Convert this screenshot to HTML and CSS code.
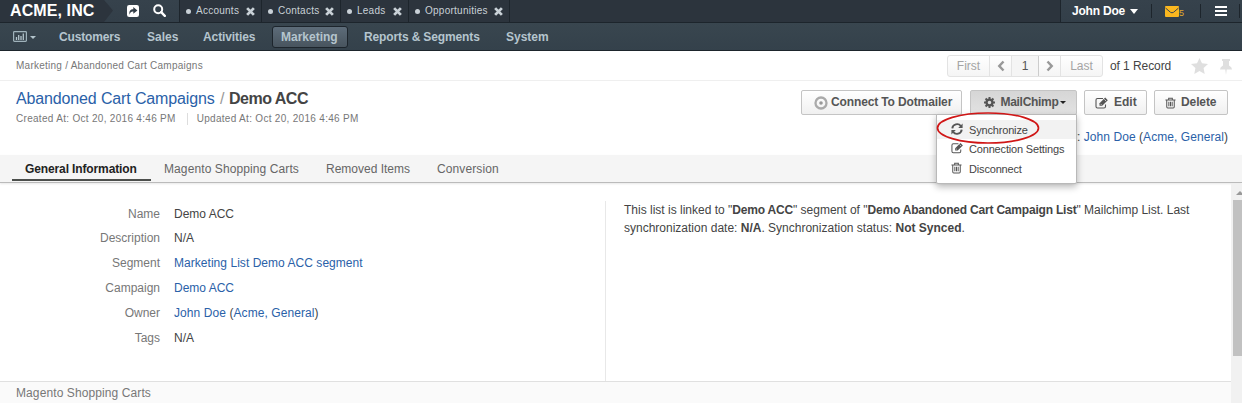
FILE: index.html
```html
<!DOCTYPE html>
<html lang="en">
<head>
<meta charset="utf-8">
<title>Demo ACC</title>
<link rel="stylesheet" href="styles.css">
</head>
<body>
<svg class="defs" width="0" height="0">
  <symbol id="x" viewBox="0 0 8 8"><path d="M1 1 7 7M7 1 1 7" stroke="currentColor" stroke-width="2.500"/></symbol>
  <symbol id="edit" viewBox="0 0 14 12"><path d="M10.500 7.500V9.500Q10.500 11 9 11H2.500Q1 11 1 9.500V3Q1 1.500 2.500 1.500H8" fill="none" stroke="currentColor" stroke-width="1.100"/><path d="M4.500 8.800V6.300L10.200.600 12.800 3.200 7.200 8.800Z" fill="currentColor"/><path d="M5.600 6.900 6.500 7.800M9.300 2.300 11 4" stroke="#fff" stroke-width=".7"/></symbol>
  <symbol id="trash" viewBox="0 0 12 12"><path d="M.5 2.700H11.500M4 2.500V.700H8V2.500M1.900 3V10.200Q1.900 11.400 3 11.400H9Q10.100 11.400 10.100 10.200V3M4.200 4.700V9.500M6 4.700V9.500M7.800 4.700V9.500" fill="none" stroke="currentColor" stroke-width="1.100"/></symbol>
</svg>

<header class="top">
  <div class="brand">ACME, INC</div>
  <svg class="brand-arrow" width="9" height="22"><path d="M0 0 9 10.500 0 22Z" fill="#2c343d"/></svg>
  <svg class="ico-share" width="12" height="12" viewBox="0 0 12 12"><rect width="12" height="12" rx="2.200" fill="#fff"/><path d="M2.800 9.800C1.600 6 3.500 4.200 6.300 4.200V2L10.400 5.500 6.300 8.800V6.500C4.300 6.400 3 7.200 2.800 9.800Z" fill="#323d47"/></svg>
  <svg class="ico-search" width="13" height="13" viewBox="0 0 13 13"><circle cx="5.200" cy="5.200" r="4" fill="none" stroke="#fff" stroke-width="2"/><path d="M8.200 8.200 11.800 11.800" stroke="#fff" stroke-width="2.400" stroke-linecap="round"/></svg>
  <div class="pins">
    <div class="pin p1"><i></i><span>Accounts</span><svg><use href="#x"/></svg></div>
    <div class="pin p2"><i></i><span>Contacts</span><svg><use href="#x"/></svg></div>
    <div class="pin p3"><i></i><span>Leads</span><svg><use href="#x"/></svg></div>
    <div class="pin p4"><i></i><span>Opportunities</span><svg><use href="#x"/></svg></div>
  </div>
  <div class="user">
    <span class="user-name">John Doe</span>
    <svg width="8" height="5"><path d="M0 0H8L4 5Z" fill="#fff"/></svg>
    <i class="sep s1"></i>
    <svg width="14" height="11" viewBox="0 0 14 11"><rect width="14" height="11" rx="1" fill="#fab71f"/><path d="M.5 2 5.500 6.300Q7 7.300 8.500 6.300L13.500 2" fill="none" stroke="#3a4650" stroke-width="1"/></svg>
    <span class="count">5</span>
    <i class="sep s2"></i>
    <svg width="12" height="10"><path d="M0 1H12M0 5H12M0 9H12" stroke="#fff" stroke-width="2"/></svg>
    <i class="sep s3"></i>
  </div>
</header>

<nav class="nav">
  <svg class="dash" width="14" height="11" viewBox="0 0 14 11"><rect x=".6" y=".6" width="12.800" height="9.800" rx=".8" fill="none" stroke="#9fb2bb" stroke-width="1.200"/><path d="M3.500 9V6M5.700 9V4M8 9V5M10.300 9V2.500" stroke="#b3c4cc" stroke-width="1.300"/></svg>
  <svg class="dash-caret" width="6" height="3"><path d="M0 0H6L3 3Z" fill="#b3c4cc"/></svg>
  <a class="n1">Customers</a><a class="n2">Sales</a><a class="n3">Activities</a><a class="active">Marketing</a><a class="n5">Reports &amp; Segments</a><a class="n6">System</a>
</nav>

<div class="crumbs">
  <span class="trail">Marketing / <span>Abandoned Cart Campaigns</span></span>
  <div class="pager">
    <span class="g1">First</span>
    <span class="g2"><svg width="8" height="12"><path d="M6.500 1.500 2.300 6 6.500 10.500" fill="none" stroke="#999" stroke-width="2.500"/></svg></span>
    <span class="g3">1</span>
    <span class="g4"><svg width="8" height="12"><path d="M1.500 1.500 5.700 6 1.500 10.500" fill="none" stroke="#999" stroke-width="2.500"/></svg></span>
    <span class="g5">Last</span>
  </div>
  <span class="total">of 1 Record</span>
  <svg class="star" width="17" height="16" viewBox="0 0 17 16"><path d="M8.500 0 11 5.300 17 6 12.600 10 13.700 16 8.500 13.100 3.300 16 4.400 10 0 6 6 5.300Z" fill="#dfdfdf"/></svg>
  <svg class="tack" width="12" height="16" viewBox="0 0 12 16"><path d="M2 0H10V2H9V6.500Q12 8 12 10.500H6.700L6 16 5.300 10.500H0Q0 8 3 6.500V2H2Z" fill="#dfdfdf"/></svg>
</div>

<section class="head">
  <div class="title-block">
    <h1><a>Abandoned Cart Campaigns</a><em>/</em><b>Demo ACC</b></h1>
    <div class="dates"><span>Created At: Oct 20, 2016 4:46 PM</span><span class="updated">Updated At: Oct 20, 2016 4:46 PM</span></div>
  </div>
  <div class="actions">
    <div class="buttons">
      <button class="btn b1"><svg width="14" height="14" viewBox="0 0 14 14"><circle cx="7" cy="7" r="5.500" fill="none" stroke="#aaa" stroke-width="2.300"/><circle cx="7" cy="7" r="1.800" fill="#999"/></svg><span>Connect To Dotmailer</span></button>
      <div class="drop">
        <button class="btn b2"><svg width="11" height="11" viewBox="0 0 12 12"><circle cx="6" cy="6" r="3.200" fill="none" stroke="#555" stroke-width="2.500"/><path d="M6 0V2.500M6 9.500V12M0 6H2.500M9.500 6H12M1.700 1.700 3.300 3.300M8.700 8.700 10.300 10.300M10.300 1.700 8.700 3.300M3.300 8.700 1.700 10.300" stroke="#555" stroke-width="2.200"/></svg><span>MailChimp</span><svg class="caret" width="6" height="3"><path d="M0 0H6L3 3Z" fill="#222"/></svg></button>
        <div class="menu">
          <div class="mi hover"><svg width="12" height="12" viewBox="0 0 12 12"><path d="M1.300 5.300C1.700 1 7.500-.200 9.800 3M10.700 6.700C10.300 11 4.500 12.200 2.200 9" fill="none" stroke="#555" stroke-width="1.900"/><path d="M11.600.600V5H7.200ZM.400 11.400V7H4.800Z" fill="#555"/></svg><span>Synchronize</span></div>
          <div class="mi"><svg width="13" height="12"><use href="#edit"/></svg><span>Connection Settings</span></div>
          <div class="mi last"><svg width="11" height="12"><use href="#trash"/></svg><span>Disconnect</span></div>
          <svg class="ring" width="104" height="34"><ellipse cx="52" cy="17" rx="50.500" ry="15" fill="none" stroke="#d01616" stroke-width="1.700"/></svg>
        </div>
      </div>
      <button class="btn b3"><svg width="14" height="12"><use href="#edit"/></svg><span>Edit</span></button>
      <button class="btn b4"><svg width="11" height="12"><use href="#trash"/></svg><span>Delete</span></button>
    </div>
    <div class="owner">Owner: <a>John Doe</a> (<a>Acme, General</a>)</div>
  </div>
</section>

<div class="tabs"><a class="tab on">General Information</a><a class="tab t2">Magento Shopping Carts</a><a class="tab t3">Removed Items</a><a class="tab t4">Conversion</a></div>

<div class="view">
  <main class="content">
    <div class="cols">
      <dl class="fields">
        <dt class="first">Name</dt><dd class="first">Demo ACC</dd>
        <dt>Description</dt><dd>N/A</dd>
        <dt>Segment</dt><dd class="seg"><a>Marketing List Demo ACC segment</a></dd>
        <dt>Campaign</dt><dd><a>Demo ACC</a></dd>
        <dt>Owner</dt><dd class="own"><a>John Doe</a> (<a>Acme, General</a>)</dd>
        <dt>Tags</dt><dd>N/A</dd>
      </dl>
      <div class="note"><div class="l1">This list is linked to "<b>Demo ACC</b>" segment of "<b>Demo Abandoned Cart Campaign List</b>" Mailchimp List. Last</div><div class="l2">synchronization date: <b>N/A</b>. Synchronization status: <b>Not Synced</b>.</div></div>
    </div>
    <div class="next">Magento Shopping Carts</div>
  </main>
  <div class="scroll"><svg width="8" height="4"><path d="M0 4 4 0 8 4Z" fill="#999"/></svg><i></i></div>
</div>
</body>
</html>
```
FILE: styles.css
```css
* { box-sizing: border-box; }
body { margin: 0; width: 1242px; height: 403px; overflow: hidden; background: #fff; color: #444; font: 12px/18px "Liberation Sans", Arial, sans-serif; }
svg { display: block; flex: none; }
.defs { position: absolute; }
span, a { white-space: nowrap; }
a { color: #2a61a8; }

.top { display: flex; align-items: center; height: 23px; background: linear-gradient(#36424c, #333f49); border-bottom: 1px solid #1d252c; }
.brand { width: 104px; height: 22px; padding-left: 10px; background: #2c343d; color: #fff; font-weight: bold; font-size: 16px; line-height: 21px; letter-spacing: .1px; white-space: nowrap; }
.ico-share { margin: 0 0 1px 14px; }
.ico-search { margin: 0 0 1px 14px; }
.pins { display: flex; flex: 1; height: 22px; margin-left: 13px; background: #2c343d; border-left: 1px solid #1d252c; }
.pin { display: flex; align-items: center; padding-left: 6px; border-right: 1px solid #1d252c; color: #c9d1d7; font-size: 10px; letter-spacing: .25px; }
.pin i { width: 5px; height: 5px; border-radius: 50%; background: #c9d1d7; }
.pin span { flex: 1; margin-left: 5px; }
.pin svg { width: 9px; height: 9px; margin-right: 6px; }
.p1 { width: 82px; } .p2 { width: 79px; } .p3 { width: 68px; } .p4 { width: 101px; }
.user { display: flex; align-items: center; width: 182px; height: 22px; padding-left: 11px; border-left: 1px solid #1d252c; color: #fff; font-weight: bold; }
.user-name { width: 58px; letter-spacing: -.2px; }
.sep { width: 1px; height: 14px; background: #1d252c; }
.s1 { margin: 0 13px 0 13px; } .s2 { margin: 0 14px 0 16px; } .s3 { margin-left: 12px; }
.count { width: 5px; margin-top: 3px; color: #e0a92a; font-size: 9px; font-weight: normal; line-height: 10px; }

.nav { display: flex; align-items: center; height: 28px; background: linear-gradient(#39464f, #34414b); border-bottom: 1px solid #1d252c; color: #b5c5ce; font-weight: bold; }
.nav a { color: #b5c5ce; }
.dash { margin: 0 0 1px 13px; }
.dash-caret { margin: 1px 23px 0 3px; }
.n1 { width: 88px; letter-spacing: -.15px; } .n2 { width: 56px; } .n3 { width: 69px; letter-spacing: -.1px; }
.nav .active { width: 76px; height: 22px; padding-left: 8px; border: 1px solid #1d252c; border-radius: 3px; background: linear-gradient(#5d6c79, #48545e); line-height: 20px; }
.n5 { width: 142px; margin-left: 16px; letter-spacing: -.13px; }

.crumbs { display: flex; align-items: center; height: 30px; padding-left: 16px; border-bottom: 1px solid #efefef; }
.trail { width: 931px; color: #777; font-size: 10px; letter-spacing: .25px; }
.pager { display: flex; height: 22px; border: 1px solid #e3e3e3; border-radius: 3px; background: linear-gradient(#fff, #f5f5f5); color: #a4a4a4; line-height: 20px; }
.pager span { display: flex; align-items: center; justify-content: center; border-right: 1px solid #e3e3e3; }
.g1 { width: 42px; } .g2 { width: 22px; }
.pager .g3 { width: 27px; color: #555; background: #f5f5f5; border-color: #ccc; }
.g4 { width: 22px; }
.pager .g5 { width: 41px; border: 0; }
.total { width: 81px; margin-left: 7px; letter-spacing: -.08px; }
.tack { margin-left: 12px; margin-top: 2px; }

.head { display: flex; justify-content: space-between; height: 74px; padding: 0 14px 0 16px; }
h1 { display: flex; height: 20px; margin: 8px 0 0; font-size: 16px; font-weight: normal; line-height: 20px; }
h1 a { width: 199px; letter-spacing: -.14px; }
h1 em { width: 14px; padding-left: 5px; color: #999; font-style: normal; }
h1 b { letter-spacing: -.5px; }
.dates { display: flex; align-items: center; margin-top: 4px; height: 12px; color: #777; font-size: 10px; line-height: 12px; letter-spacing: .3px; }
.updated { margin-left: 11px; padding-left: 9px; border-left: 1px solid #ddd; }
.buttons { display: flex; height: 25px; margin-top: 9px; }
.btn { display: flex; align-items: center; height: 25px; padding: 0; border: 1px solid #c4c4c4; border-radius: 2px; background: linear-gradient(#fff, #f0f0f0); color: #555; font: bold 12px/23px "Liberation Sans", Arial, sans-serif; }
.b1 { width: 161px; padding-left: 12px; }
.b1 span { margin-left: 3px; letter-spacing: -.13px; }
.drop { position: relative; width: 107px; margin: 0 7px 0 8px; }
.b2 { width: 107px; padding-left: 13px; background: linear-gradient(#d6d6d6, #e2e2e2); }
.b2 span { width: 61px; margin-left: 4px; letter-spacing: -.3px; }
.b3 { width: 63px; margin-right: 7px; padding-left: 10px; }
.b3 span { margin-left: 5px; }
.b4 { width: 74px; padding-left: 10px; }
.b4 span { margin-left: 5px; letter-spacing: -.1px; }
.menu { position: absolute; left: -34px; top: 24px; z-index: 2; width: 141px; height: 70px; padding-top: 5px; background: #fff; border: 1px solid #b9b9b9; border-radius: 0 0 2px 2px; box-shadow: 0 3px 7px rgba(0,0,0,.28); color: #444; font-size: 11px; }
.mi { display: flex; align-items: center; height: 20px; padding-left: 14px; }
.mi svg { margin-bottom: 2px; color: #555; }
.mi span { margin-left: auto; width: 107px; letter-spacing: -.17px; }
.hover { height: 19px; background: #f2f2f2; }
.ring { position: absolute; left: -1px; top: -4px; }
.owner { margin-top: 13px; text-align: right; white-space: nowrap; letter-spacing: .06px; }

.tabs { display: flex; height: 28px; padding-left: 12px; background: #f5f5f5; border-bottom: 1px solid #bbb; box-shadow: 0 1px 2px #e8e8e8; line-height: 28px; }
.tab { color: #666; letter-spacing: .1px; }
.tabs .on { width: 139px; height: 26px; padding-left: 13px; border-bottom: 2px solid #4c4f4c; color: #222; font-weight: bold; letter-spacing: -.12px; }
.t2 { width: 162px; margin-left: 13px; } .t3 { width: 111px; }
.tabs .t3 { letter-spacing: 0; }

.view { display: flex; height: 220px; }
.content { width: 1231px; }
.cols { display: flex; height: 198px; padding-top: 18px; }
.fields { display: grid; grid-template-columns: 160px 1fr; grid-auto-rows: 25px; column-gap: 14px; align-content: start; width: 605px; margin: 0; line-height: 25px; }
dt { text-align: right; color: #777; }
dd { margin: 0; }
.first { padding-top: 1px; line-height: 24px; }
.seg { letter-spacing: .04px; }
.own { letter-spacing: .08px; }
.note { flex: 1; padding-left: 18px; border-left: 1px solid #e8e8e8; white-space: nowrap; }
.l1 b { letter-spacing: -.2px; }
.next { height: 22px; padding-left: 16px; border-top: 1px solid #e0e0e0; background: #fafafa; color: #777; line-height: 22px; letter-spacing: .1px; }
.scroll { width: 11px; padding: 6px 0 0 2px; margin-top: 1px; background: #f1f1f1; }
.scroll svg { margin: 1px 0 0 3px; }
.scroll i { display: block; width: 9px; height: 156px; margin-top: 5px; background: #c1c1c1; }
```
